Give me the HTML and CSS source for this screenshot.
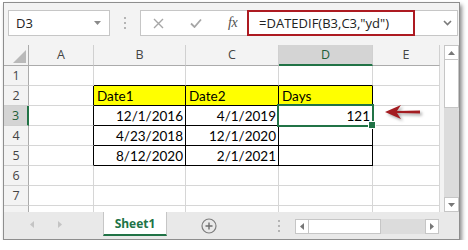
FILE: index.html
```html
<!DOCTYPE html>
<html>
<head>
<meta charset="utf-8">
<link rel="stylesheet" href="styles.css">
</head>
<body>
<div class="window">
  <div class="fbar">
    <div class="namebox">
      <span>D3</span>
      <svg class="caret" width="7" height="4" viewBox="0 0 7 4"><path d="M0 0H7L3.5 4Z" fill="#8a8a8a"/></svg>
    </div>
    <svg class="grip" width="2" height="12" viewBox="0 0 2 12"><rect x="0" y="0" width="2" height="2" fill="#b4b4b4"/><rect x="0" y="5" width="2" height="2" fill="#b4b4b4"/><rect x="0" y="10" width="2" height="2" fill="#b4b4b4"/></svg>
    <div class="formula">
      <svg class="ico ico-x" width="11" height="11" viewBox="0 0 11 11"><path d="M1 1L10 10M10 1L1 10" stroke="#a6a6a6" stroke-width="1.4"/></svg>
      <svg class="ico ico-ok" width="12" height="10" viewBox="0 0 12 10"><path d="M1 5.5L4.5 9L11 1.5" stroke="#a6a6a6" stroke-width="1.8" fill="none"/></svg>
      <span class="fx">fx</span>
      <div class="ftext">=DATEDIF(B3,C3,"yd")</div>
      <svg class="chev" width="9" height="6" viewBox="0 0 9 6"><path d="M1 1L4.5 4.5L8 1" stroke="#7a7a7a" stroke-width="1.6" fill="none"/></svg>
    </div>
  </div>

  <div class="main">
    <div class="sheet">
      <div class="c hd corner"><svg width="13" height="13" viewBox="0 0 13 13"><path d="M13 0V13H0Z" fill="#b9b9b9"/></svg></div>
      <div class="c hd col">A</div>
      <div class="c hd col">B</div>
      <div class="c hd col">C</div>
      <div class="c hd col sel">D</div>
      <div class="c hd col">E</div>

      <div class="c hd row">1</div>
      <div class="c"></div>
      <div class="c tt"></div>
      <div class="c tt"></div>
      <div class="c tt"></div>
      <div class="c"></div>

      <div class="c hd row">2</div>
      <div class="c tl"></div>
      <div class="c t y">Date1</div>
      <div class="c t y">Date2</div>
      <div class="c t y">Days</div>
      <div class="c"></div>

      <div class="c hd row sel">3</div>
      <div class="c tl"></div>
      <div class="c t r">12/1/2016</div>
      <div class="c t r">4/1/2019</div>
      <div class="c t r active">121</div>
      <div class="c"></div>

      <div class="c hd row">4</div>
      <div class="c tl"></div>
      <div class="c t r">4/23/2018</div>
      <div class="c t r">12/1/2020</div>
      <div class="c t r"></div>
      <div class="c"></div>

      <div class="c hd row">5</div>
      <div class="c tl"></div>
      <div class="c t r">8/12/2020</div>
      <div class="c t r">2/1/2021</div>
      <div class="c t r"></div>
      <div class="c"></div>

      <div class="c hd row">6</div>
      <div class="c"></div>
      <div class="c"></div>
      <div class="c"></div>
      <div class="c"></div>
      <div class="c"></div>

      <div class="c hd row">7</div>
      <div class="c"></div>
      <div class="c"></div>
      <div class="c"></div>
      <div class="c"></div>
      <div class="c"></div>

      <div class="c hd row last"></div>
      <div class="c last"></div>
      <div class="c last"></div>
      <div class="c last"></div>
      <div class="c last"></div>
      <div class="c last"></div>
    </div>
    <div class="vscroll">
      <div class="sbtn"><svg width="7" height="4" viewBox="0 0 7 4"><path d="M0 4H7L3.5 0Z" fill="#777"/></svg></div>
      <div class="vthumb"></div>
      <div class="vtrack"></div>
      <div class="sbtn"><svg width="7" height="4" viewBox="0 0 7 4"><path d="M0 0H7L3.5 4Z" fill="#777"/></svg></div>
    </div>
  </div>

  <div class="tabbar">
    <div class="nav">
      <svg width="4" height="7" viewBox="0 0 4 7"><path d="M4 0V7L0 3.5Z" fill="#c4c4c4"/></svg>
      <svg width="4" height="7" viewBox="0 0 4 7"><path d="M0 0V7L4 3.5Z" fill="#c4c4c4"/></svg>
    </div>
    <div class="tab">Sheet1</div>
    <svg class="plus" width="16" height="16" viewBox="0 0 16 16"><circle cx="8" cy="8" r="7" fill="none" stroke="#7d7d7d" stroke-width="1.2"/><path d="M8 4.5V11.5M4.5 8H11.5" stroke="#6d6d6d" stroke-width="1.4"/></svg>
    <svg class="hgrip" width="2" height="12" viewBox="0 0 2 12"><rect x="0" y="0" width="2" height="2" fill="#b4b4b4"/><rect x="0" y="5" width="2" height="2" fill="#b4b4b4"/><rect x="0" y="10" width="2" height="2" fill="#b4b4b4"/></svg>
    <div class="hscroll">
      <div class="sbtn h"><svg width="4" height="7" viewBox="0 0 4 7"><path d="M4 0V7L0 3.5Z" fill="#777"/></svg></div>
      <div class="hthumb"></div>
      <div class="htrack"></div>
      <div class="sbtn h"><svg width="4" height="7" viewBox="0 0 4 7"><path d="M0 0V7L4 3.5Z" fill="#777"/></svg></div>
    </div>
  </div>

  <svg class="arrow" width="38" height="18" viewBox="0 0 38 18"><path d="M1 8L17 1L13 7L36 6.5V9.5L13 9L17 15Z" fill="#a31d22"/></svg>
</div>
</body>
</html>
```

FILE: styles.css
```css
* { box-sizing: border-box; }

body {
  margin: 0;
  padding: 2px 0 0 3px;
  background: #fff;
  font-family: "Open Sans", "Noto Sans", sans-serif;
}

.window {
  position: relative;
  width: 457px;
  height: 238px;
  border: 1px solid #8e8e8e;
  background: #f3f3f3;
  box-shadow: 2px 3px 4px rgba(0, 0, 0, 0.45);
  display: flex;
  flex-direction: column;
}

/* formula bar */
.fbar {
  height: 42px;
  flex: none;
  display: flex;
  align-items: flex-start;
  padding: 7px 1px 0 4px;
}

.namebox {
  width: 102px;
  height: 26px;
  border: 1px solid #c6c6c6;
  background: #fff;
  display: flex;
  align-items: center;
  justify-content: space-between;
  padding: 0 8px 0 7px;
  font-size: 13px;
  color: #222;
}

.grip { margin: 7px 0 0 14px; }

.formula {
  margin-left: 14px;
  flex: 1;
  height: 26px;
  border: 1px solid #c6c6c6;
  background: #fff;
  display: flex;
  align-items: center;
}

.ico-x { margin-left: 12px; }
.ico-ok { margin-left: 26px; }

.fx {
  margin-left: 26px;
  font-family: "Liberation Serif", serif;
  font-style: italic;
  font-size: 14px;
  color: #505050;
  letter-spacing: -0.5px;
}

.ftext {
  margin: -1px 0 -1px 10px;
  width: 168px;
  height: 26px;
  border: 2px solid #ad1a21;
  display: flex;
  align-items: center;
  padding-left: 10px;
  font-size: 13px;
  color: #222;
}

.chev { margin-left: auto; margin-right: 5px; }

/* grid */
.main {
  height: 167px;
  flex: none;
  display: flex;
}

.sheet {
  width: 436px;
  display: grid;
  grid-template-columns: 25px 65px 92px 93px 94px 67px;
  grid-template-rows: 21px repeat(7, 20px) 6px;
  background: #fff;
  font-family: "Lato", "Liberation Sans", sans-serif;
  font-size: 13.5px;
  color: #000;
}

.c {
  border-right: 1px solid #d6d6d6;
  border-bottom: 1px solid #d6d6d6;
  display: flex;
  align-items: flex-end;
  padding: 0 2px 1px 3px;
  line-height: 16px;
  white-space: nowrap;
  position: relative;
}

.c.last { border-bottom: none; }

.hd {
  background: #f3f3f3;
  font-family: "Open Sans", sans-serif;
  font-size: 12.5px;
  color: #444;
  justify-content: center;
  align-items: center;
  padding: 0;
}

.hd.col { border-bottom-color: #ababab; border-right-color: #d0d0d0; }
.hd.row { border-right-color: #ababab; border-bottom-color: #d0d0d0; }
.hd.corner { border-bottom-color: #ababab; border-right-color: #ababab; justify-content: flex-end; align-items: flex-end; padding: 0 2px 2px 0; }

.hd.col.sel { background: #d4d4d4; border-bottom: 2px solid #217346; color: #1e5e38; }
.hd.row.sel { background: #d4d4d4; border-right: 2px solid #217346; color: #1e5e38; }

.t { border-right-color: #000; border-bottom-color: #000; }
.tl { border-right-color: #000; }
.tt { border-bottom-color: #000; }
.y { background: #ffff00; }
.r { justify-content: flex-end; }

.active::after {
  content: "";
  position: absolute;
  top: -2px;
  left: -2px;
  right: -2px;
  bottom: -2px;
  border: 2px solid #217346;
  z-index: 2;
}

.active::before {
  content: "";
  position: absolute;
  right: -4px;
  bottom: -4px;
  width: 6px;
  height: 6px;
  background: #217346;
  border: 1px solid #fff;
  z-index: 3;
}

/* scrollbars */
.vscroll {
  margin-left: 4px;
  width: 15px;
  display: flex;
  flex-direction: column;
}

.sbtn {
  width: 15px;
  height: 15px;
  background: #fff;
  border: 1px solid #c6c6c6;
  display: flex;
  align-items: center;
  justify-content: center;
  flex: none;
}

.vthumb {
  height: 48px;
  background: #fff;
  border: 1px solid #c6c6c6;
  border-top: none;
}

.vtrack { flex: 1; background: #dcdcdc; }

/* tab bar */
.tabbar {
  flex: 1;
  display: flex;
  align-items: flex-start;
  background: #e9e9e9;
}

.nav {
  width: 99px;
  height: 24px;
  display: flex;
  align-items: center;
  padding-left: 26px;
  gap: 24px;
}

.tab {
  width: 64px;
  height: 24px;
  background: #fff;
  border-left: 1px solid #c6c6c6;
  border-right: 1px solid #c6c6c6;
  border-bottom: 2px solid #217346;
  display: flex;
  align-items: center;
  justify-content: center;
  font-weight: 700;
  font-size: 12px;
  color: #217346;
}

.plus { margin: 6px 0 0 34px; }

.hgrip { margin: 8px 0 0 61px; }

.hscroll {
  margin: 7px 0 0 15px;
  width: 144px;
  height: 15px;
  display: flex;
}

.sbtn.h { width: 14px; }

.hthumb {
  width: 72px;
  background: #fff;
  border: 1px solid #c6c6c6;
  border-left: none;
}

.htrack { flex: 1; background: #dcdcdc; }

.arrow {
  position: absolute;
  left: 380px;
  top: 101px;
  filter: drop-shadow(2px 2px 1.5px rgba(0, 0, 0, 0.35));
}
```
